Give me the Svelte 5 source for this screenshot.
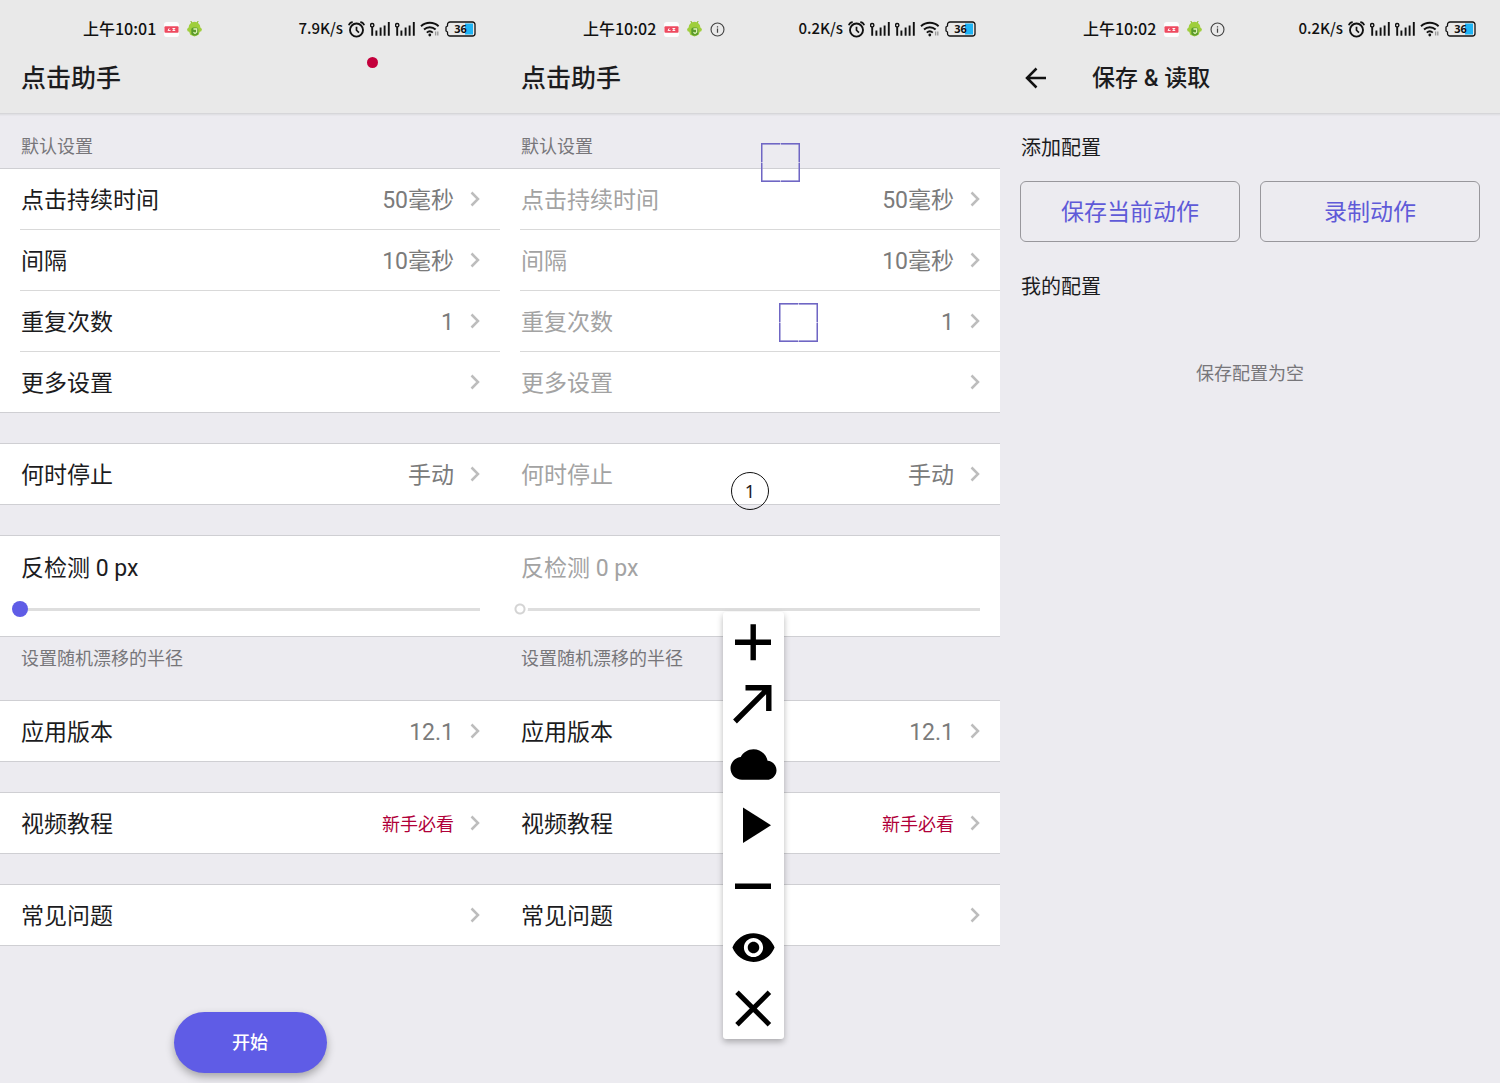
<script>
  const basics = [
    { label: '点击持续时间', value: '50毫秒' },
    { label: '间隔', value: '10毫秒' },
    { label: '重复次数', value: '1' },
    { label: '更多设置', value: '' }
  ];
  const stop = [{ label: '何时停止', value: '手动' }];
  const about = [
    [{ label: '应用版本', value: '12.1' }],
    [{ label: '视频教程', value: '新手必看', hot: true }],
    [{ label: '常见问题', value: '' }]
  ];
  const tools = ['添加', '滑动', '保存', '播放', '移除', '显示', '关闭'];
</script>

{#snippet signal()}
  <svg class="signal" viewBox="0 0 20 16" width="20" height="16" aria-hidden="true">
    <circle cx="2.2" cy="4.2" r="1.7" fill="none" stroke="#111" stroke-width="1.4" />
    <path d="M2.2 6v8.800M6.400 9.500v5.300M10.600 6.500v8.300M14.600 4.500v10.300M18.800 1v13.800" stroke="#111" stroke-width="1.900" fill="none" />
  </svg>
{/snippet}

{#snippet statusBar(time, speed, info)}
  <div class="status">
    <div class="status-side">
      <span class="time">{time}</span>
      <svg viewBox="0 0 16 16" width="15" height="15" aria-hidden="true">
        <rect width="16" height="16" rx="3" fill="#fdfdfd" />
        <rect x="0.500" y="4.500" width="15" height="7" rx="1" fill="#ee4a5f" />
        <path d="M4 9h3M5.500 6.800L4.500 8.600M9 7h3M9 9h3M10.500 6.500v3" stroke="#fff" stroke-width="1" />
      </svg>
      <svg viewBox="1 1 14 15" width="15" height="16" aria-hidden="true">
        <path d="M4.500 1l1.200 2M11.500 1l-1.200 2" stroke="#8cba32" stroke-width="1" />
        <path d="M2.500 7a5.500 5.200 0 0 1 11 0l1.500 1.600-.6 2-1.500.4-1 3L8 15.500 4 14l-1-3-1.500-.4-.5-2z" fill="#9fce3c" />
        <rect x="5" y="7" width="6.500" height="7.500" rx="2" fill="#5a9a2c" />
        <path d="M7 8.500h3v3l-1.500 1.200L7 11.500" fill="none" stroke="#dff3b5" stroke-width="1.200" />
      </svg>
      {#if info}
        <svg viewBox="0 0 16 16" width="15" height="15" aria-hidden="true">
          <circle cx="8" cy="8" r="6.900" fill="none" stroke="#444" stroke-width="1.200" />
          <path d="M8 7v4.500M8 4.400v1.500" stroke="#444" stroke-width="1.300" />
        </svg>
      {/if}
    </div>
    <div class="status-side right">
      <span class="speed">{speed}</span>
      <svg viewBox="0 0 18 18" width="17" height="17" aria-hidden="true">
        <circle cx="9" cy="9.600" r="6.900" fill="none" stroke="#111" stroke-width="2" />
        <path d="M9 6v3.800l2.600 2.600M.8 4.600A5 5 0 0 1 5 1.200M17.200 4.600A5 5 0 0 0 13 1.200" fill="none" stroke="#111" stroke-width="1.800" />
      </svg>
      {@render signal()}
      {@render signal()}
      <svg viewBox="0 0 20 16" width="20" height="16" aria-hidden="true">
        <path d="M1 5.200a13 13 0 0 1 17.600 0M4 8.500a8.600 8.600 0 0 1 11.600 0M6.800 11.600a4.500 4.500 0 0 1 6 0" fill="none" stroke="#111" stroke-width="1.900" />
        <circle cx="9.800" cy="14" r="1.400" fill="#111" />
        <path d="M15.600 10.500v4M17.800 10.500v4" stroke="#999" stroke-width="1.300" />
      </svg>
      <svg viewBox="0 0 31 16" width="31" height="16" aria-hidden="true">
        <rect x="20" y="2.500" width="8" height="11" fill="#1fb4f4" />
        <path d="M5 1h22.500a2.500 2.500 0 0 1 2.500 2.500v9a2.500 2.500 0 0 1-2.500 2.500H5a2.500 2.500 0 0 1-2.500-2.500V11L1 10V6l1.500-1V3.500A2.500 2.500 0 0 1 5 1z" fill="none" stroke="#111" stroke-width="1.300" />
        <text x="15.500" y="12" text-anchor="middle" class="charge">36</text>
      </svg>
    </div>
  </div>
{/snippet}

{#snippet group(rows, off)}
  <ul class="group">
    {#each rows as row}
      <li>
        <button class="row" type="button">
          <span class="label" class:off>{row.label}</span>
          <span class="value" class:hot={row.hot}>{row.value}</span>
          <svg viewBox="0 0 10 16" width="10" height="16" aria-hidden="true">
            <path d="M1.500 1.500L8 8l-6.500 6.500" fill="none" stroke="#bdbdbd" stroke-width="2.500" />
          </svg>
        </button>
      </li>
    {/each}
  </ul>
{/snippet}

{#snippet settings(id, off)}
  <h2 class="caption">默认设置</h2>
  <div class="stack">
    {@render group(basics, off)}
    {@render group(stop, off)}
    <div class="group drift">
      <label class="label" class:off for={id}>反检测 0 px</label>
      <input {id} type="range" min="0" max="100" value="0" disabled={off} />
    </div>
  </div>
  <p class="hint">设置随机漂移的半径</p>
  <div class="stack">
    {#each about as rows}
      {@render group(rows, false)}
    {/each}
  </div>
{/snippet}

<main>
  <section class="screen">
    <header>
      {@render statusBar('上午10:01', '7.9K/s', false)}
      <div class="bar"><h1>点击助手</h1></div>
      <span class="record"></span>
    </header>
    {@render settings('drift-a', false)}
    <button class="start" type="button">开始</button>
  </section>

  <section class="screen">
    <header>
      {@render statusBar('上午10:02', '0.2K/s', true)}
      <div class="bar"><h1>点击助手</h1></div>
    </header>
    {@render settings('drift-b', true)}

    {#each ['first', 'second'] as spot}
      <svg class="target {spot}" viewBox="0 0 39 39" width="39" height="39" aria-hidden="true">
        <rect x="0.700" y="0.700" width="37.600" height="37.600" fill="none" stroke="#b9b4e2" stroke-width="1.400" />
        <path d="M19 .7H.7V19M20 .7h18.300V19M38.300 20v18.300H20M19 38.300H.7V20" fill="none" stroke="#6f66c4" stroke-width="1.400" />
      </svg>
    {/each}
    <span class="point">1</span>

    <div class="tools" role="toolbar" aria-label="动作">
      {#each tools as tool, i}
        <button type="button" aria-label={tool}>
          <svg viewBox="0 0 61 61" width="61" height="61" aria-hidden="true">
            {#if i === 0}
              <path d="M12 30.200h36M30.200 12.200v36" stroke="#000" stroke-width="5.400" />
            {:else if i === 1}
              <path d="M22.500 14.800h23.300v23.200M45 15.500L12 48.500" fill="none" stroke="#000" stroke-width="5.400" />
            {:else if i === 2}
              <path transform="translate(7.500 7.500) scale(1.917)" d="M19.350 10.040C18.670 6.590 15.640 4 12 4 9.110 4 6.600 5.640 5.350 8.040 2.340 8.360 0 10.910 0 14c0 3.310 2.690 6 6 6h13c2.760 0 5-2.240 5-5 0-2.640-2.050-4.780-4.650-4.960z" />
            {:else if i === 3}
              <path d="M20 12.500v35.600L48 30.300z" />
            {:else if i === 4}
              <path d="M12 30.200h36" stroke="#000" stroke-width="5.400" />
            {:else if i === 5}
              <path transform="translate(7.500 7.500) scale(1.917)" d="M12 4.500C7 4.500 2.730 7.610 1 12c1.730 4.390 6 7.500 11 7.500s9.270-3.110 11-7.500c-1.730-4.390-6-7.500-11-7.500zM12 17c-2.760 0-5-2.240-5-5s2.240-5 5-5 5 2.240 5 5-2.240 5-5 5zm0-8c-1.660 0-3 1.340-3 3s1.340 3 3 3 3-1.340 3-3-1.340-3-3-3z" />
            {:else}
              <path d="M14 14.300l32.400 32.400M46.400 14.300L14 46.700" stroke="#000" stroke-width="5" />
            {/if}
          </svg>
        </button>
      {/each}
    </div>
  </section>

  <section class="screen">
    <header>
      {@render statusBar('上午10:02', '0.2K/s', true)}
      <div class="bar">
        <button class="back" type="button" aria-label="返回">
          <svg viewBox="0 0 22 22" width="22" height="22" aria-hidden="true">
            <path d="M21 11H2.500M11.500 1.500L2 11l9.500 9.500" fill="none" stroke="#111" stroke-width="2.500" />
          </svg>
        </button>
        <h1 class="sub">保存 &amp; 读取</h1>
      </div>
    </header>
    <div class="configs">
      <h2>添加配置</h2>
      <div class="actions">
        <button type="button">保存当前动作</button>
        <button type="button">录制动作</button>
      </div>
      <h2>我的配置</h2>
      <p>保存配置为空</p>
    </div>
  </section>
</main>

<style>
  :global(body) {
    margin: 0;
    background: #ecebf0;
  }
  main {
    display: grid;
    grid-template-columns: repeat(3, 1fr);
    min-height: 100vh;
    color: #1c1c1e;
    font-family: Roboto, 'Noto Sans CJK SC', sans-serif;
  }
  .screen {
    position: relative;
    display: flex;
    flex-direction: column;
  }
  h1, h2, p, ul {
    margin: 0;
    padding: 0;
    font-weight: 400;
  }
  button {
    margin: 0;
    padding: 0;
    border: 0;
    background: none;
    color: inherit;
    font-family: inherit;
    cursor: pointer;
  }
  svg {
    display: block;
    flex: none;
  }
  header {
    position: relative;
    height: 113px;
    background: #e9e9e9;
    box-shadow: 0 1px 0 #d6d6d9, 0 2px 0 #e0e0e4, 0 3px 0 #e7e6eb;
  }
  .status {
    display: flex;
    justify-content: space-between;
    height: 42px;
    padding: 8px 24px 0 83px;
    box-sizing: border-box;
    color: #111;
    font: 500 16px/40px 'Noto Sans CJK SC', sans-serif;
  }
  .status-side {
    display: flex;
    align-items: center;
    gap: 8px;
    height: 42px;
  }
  .time,
  .speed {
    height: 42px;
  }
  .speed {
    font-size: 15px;
  }
  .right {
    gap: 5px;
  }
  .charge {
    font: 700 11px 'Noto Sans', sans-serif;
    fill: #111;
  }
  .bar {
    display: flex;
    align-items: center;
    height: 71px;
    padding: 0 21px;
  }
  h1 {
    padding-top: 2px;
    font-size: 25px;
    font-weight: 500;
    line-height: 36px;
  }
  .back {
    width: 71px;
    padding-left: 4px;
  }
  .sub {
    font-size: 23px;
  }
  .record {
    position: absolute;
    left: 367px;
    top: 57px;
    width: 11px;
    height: 11px;
    border-radius: 50%;
    background: #c4003c;
  }
  .caption {
    padding: 20px 21px 8px;
    color: #77767a;
    font-size: 18px;
    line-height: 27px;
  }
  .stack {
    display: flex;
    flex-direction: column;
    gap: 30px;
  }
  .group {
    border-top: 1px solid #cfcfd3;
    border-bottom: 1px solid #cfcfd3;
    background: #fff;
    list-style: none;
  }
  li {
    height: 60px;
  }
  li + li {
    margin-left: 20px;
    border-top: 1px solid #d9d9d9;
  }
  li + li .row {
    padding-left: 1px;
  }
  .row {
    display: flex;
    align-items: center;
    width: 100%;
    height: 60px;
    padding: 0 20px 0 21px;
    font-size: 23px;
    line-height: 34px;
    text-align: left;
  }
  .row span {
    padding-top: 4px;
  }
  .label {
    flex: 1;
    font-size: 23px;
    line-height: 34px;
  }
  .off {
    color: #a3a3a3;
  }
  .value {
    margin-right: 16px;
    color: #7b7b7b;
  }
  .hot {
    color: #b00038;
    font-size: 18px;
  }
  .drift {
    display: flex;
    flex-direction: column;
    height: 100px;
  }
  .drift .label {
    flex: none;
    padding: 16px 21px 0;
  }
  input {
    appearance: none;
    height: 16px;
    margin: 15px 12px 0;
    background: linear-gradient(#dedede, #dedede) center / calc(100% - 16px) 3px no-repeat;
  }
  input::-webkit-slider-thumb {
    appearance: none;
    width: 16px;
    height: 16px;
    border-radius: 50%;
    background: #5f5ce6;
  }
  input:disabled::-webkit-slider-thumb {
    background: radial-gradient(circle, #fff 0 3px, #d4d4d4 4px 5px, #fff 6px);
  }
  .hint {
    padding: 8px 21px 28px;
    color: #77767a;
    font-size: 18px;
    line-height: 27px;
  }
  .start {
    align-self: center;
    width: 153px;
    height: 61px;
    margin: 66px 0 10px;
    border-radius: 31px;
    background: #5f5ce6;
    box-shadow: 0 4px 8px rgba(0, 0, 0, 0.3);
    color: #fff;
    font-size: 18px;
    font-weight: 500;
    line-height: 58px;
  }
  .target {
    position: absolute;
  }
  .first {
    left: 261px;
    top: 143px;
  }
  .second {
    left: 279px;
    top: 303px;
  }
  .point {
    position: absolute;
    left: 231px;
    top: 472px;
    width: 38px;
    height: 38px;
    box-sizing: border-box;
    border: 1px solid #111;
    border-radius: 50%;
    font: 18px/36px 'Noto Sans', sans-serif;
    text-align: center;
  }
  .tools {
    position: absolute;
    left: 223px;
    top: 612px;
    border-radius: 3px;
    background: #fff;
    box-shadow: 0 3px 6px rgba(0, 0, 0, 0.28);
  }
  .tools button {
    display: block;
  }
  .configs {
    padding: 20px;
  }
  .configs h2 {
    font-size: 20px;
    line-height: 30px;
    padding-left: 1px;
  }
  .actions {
    display: grid;
    grid-template-columns: 1fr 1fr;
    gap: 20px;
    margin: 18px 0 30px;
  }
  .actions button {
    height: 61px;
    padding-bottom: 3px;
    border: 1px solid #98979c;
    border-radius: 6px;
    color: #5f5ad8;
    font-size: 23px;
  }
  .configs p {
    margin-top: 58px;
    color: #77767a;
    font-size: 18px;
    line-height: 27px;
    text-align: center;
  }
</style>
